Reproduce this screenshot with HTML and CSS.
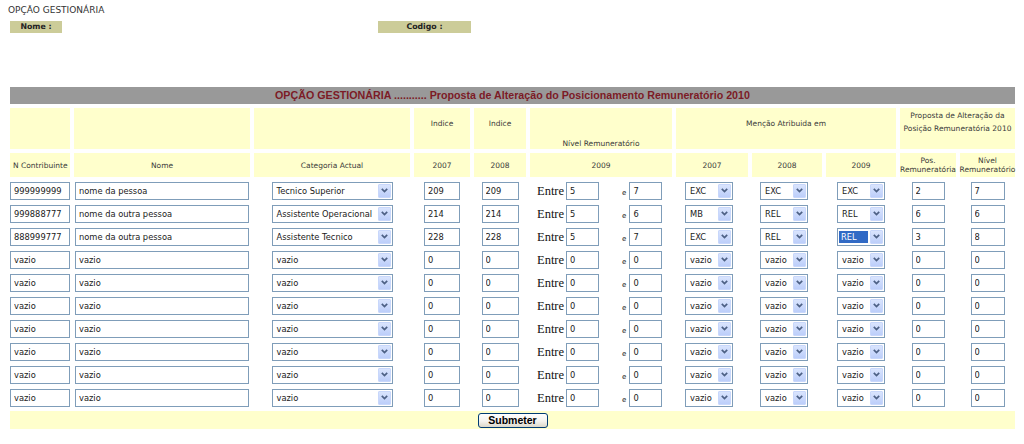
FILE: index.html
```html
<!DOCTYPE html>
<html lang="pt">
<head>
<meta charset="utf-8">
<title>Opção Gestionária</title>
<link rel="stylesheet" href="styles.css">
</head>
<body>
<div class="page">
  <div class="page-title">OPÇÃO GESTIONÁRIA</div>
  <div class="info">
    <span class="label label-nome">Nome :</span>
    <span class="label label-codigo">Codigo :</span>
  </div>

  <form class="form">
    <div class="grid">
      <div class="bar">OPÇÃO GESTIONÁRIA ........... Proposta de Alteração do Posicionamento Remuneratório 2010</div>

      <div class="hd"></div>
      <div class="hd"></div>
      <div class="hd"></div>
      <div class="hd hd-top">Indice</div>
      <div class="hd hd-top">Indice</div>
      <div class="hd hd-bottom">Nível Remuneratório</div>
      <div class="hd hd-top span3">Menção Atribuida em</div>
      <div class="hd hd-prop span2">Proposta de Alteração da<br>Posição Remuneratória 2010</div>

      <div class="hd hd2 hd-left">N Contribuinte</div>
      <div class="hd hd2">Nome</div>
      <div class="hd hd2">Categoria Actual</div>
      <div class="hd hd2">2007</div>
      <div class="hd hd2">2008</div>
      <div class="hd hd2">2009</div>
      <div class="hd hd2">2007</div>
      <div class="hd hd2">2008</div>
      <div class="hd hd2">2009</div>
      <div class="hd hd2">Pos.<br>Remuneratória</div>
      <div class="hd hd2">Nível<br>Remuneratório</div>

      <!-- row 1 -->
      <div class="cell"><input class="in w-nc" value="999999999"></div>
      <div class="cell"><input class="in w-nome" value="nome da pessoa"></div>
      <div class="cell"><div class="sel w-cat"><span class="sel-val">Tecnico Superior</span><span class="sel-btn"><svg viewBox="0 0 7 5"><path d="M0.8 0.8 3.5 3.6 6.2 0.8"/></svg></span></div></div>
      <div class="cell"><input class="in w-ind" value="209"></div>
      <div class="cell"><input class="in w-ind2" value="209"></div>
      <div class="cell cell-nivel"><span class="entre">Entre</span><input class="in w-niv" value="5"><span class="e">e</span><input class="in w-niv" value="7"></div>
      <div class="cell c-men"><div class="sel w-men"><span class="sel-val">EXC</span><span class="sel-btn"><svg viewBox="0 0 7 5"><path d="M0.8 0.8 3.5 3.6 6.2 0.8"/></svg></span></div></div>
      <div class="cell c-men"><div class="sel w-men"><span class="sel-val">EXC</span><span class="sel-btn"><svg viewBox="0 0 7 5"><path d="M0.8 0.8 3.5 3.6 6.2 0.8"/></svg></span></div></div>
      <div class="cell"><div class="sel w-men"><span class="sel-val">EXC</span><span class="sel-btn"><svg viewBox="0 0 7 5"><path d="M0.8 0.8 3.5 3.6 6.2 0.8"/></svg></span></div></div>
      <div class="cell"><input class="in w-pos" value="2"></div>
      <div class="cell"><input class="in w-pos2" value="7"></div>

      <!-- row 2 -->
      <div class="cell"><input class="in w-nc" value="999888777"></div>
      <div class="cell"><input class="in w-nome" value="nome da outra pessoa"></div>
      <div class="cell"><div class="sel w-cat"><span class="sel-val">Assistente Operacional</span><span class="sel-btn"><svg viewBox="0 0 7 5"><path d="M0.8 0.8 3.5 3.6 6.2 0.8"/></svg></span></div></div>
      <div class="cell"><input class="in w-ind" value="214"></div>
      <div class="cell"><input class="in w-ind2" value="214"></div>
      <div class="cell cell-nivel"><span class="entre">Entre</span><input class="in w-niv" value="5"><span class="e">e</span><input class="in w-niv" value="6"></div>
      <div class="cell c-men"><div class="sel w-men"><span class="sel-val">MB</span><span class="sel-btn"><svg viewBox="0 0 7 5"><path d="M0.8 0.8 3.5 3.6 6.2 0.8"/></svg></span></div></div>
      <div class="cell c-men"><div class="sel w-men"><span class="sel-val">REL</span><span class="sel-btn"><svg viewBox="0 0 7 5"><path d="M0.8 0.8 3.5 3.6 6.2 0.8"/></svg></span></div></div>
      <div class="cell"><div class="sel w-men"><span class="sel-val">REL</span><span class="sel-btn"><svg viewBox="0 0 7 5"><path d="M0.8 0.8 3.5 3.6 6.2 0.8"/></svg></span></div></div>
      <div class="cell"><input class="in w-pos" value="6"></div>
      <div class="cell"><input class="in w-pos2" value="6"></div>

      <!-- row 3 -->
      <div class="cell"><input class="in w-nc" value="888999777"></div>
      <div class="cell"><input class="in w-nome" value="nome da outra pessoa"></div>
      <div class="cell"><div class="sel w-cat"><span class="sel-val">Assistente Tecnico</span><span class="sel-btn"><svg viewBox="0 0 7 5"><path d="M0.8 0.8 3.5 3.6 6.2 0.8"/></svg></span></div></div>
      <div class="cell"><input class="in w-ind" value="228"></div>
      <div class="cell"><input class="in w-ind2" value="228"></div>
      <div class="cell cell-nivel"><span class="entre">Entre</span><input class="in w-niv" value="5"><span class="e">e</span><input class="in w-niv" value="7"></div>
      <div class="cell c-men"><div class="sel w-men"><span class="sel-val">EXC</span><span class="sel-btn"><svg viewBox="0 0 7 5"><path d="M0.8 0.8 3.5 3.6 6.2 0.8"/></svg></span></div></div>
      <div class="cell c-men"><div class="sel w-men"><span class="sel-val">REL</span><span class="sel-btn"><svg viewBox="0 0 7 5"><path d="M0.8 0.8 3.5 3.6 6.2 0.8"/></svg></span></div></div>
      <div class="cell"><div class="sel w-men"><span class="sel-val hl">REL</span><span class="sel-btn"><svg viewBox="0 0 7 5"><path d="M0.8 0.8 3.5 3.6 6.2 0.8"/></svg></span></div></div>
      <div class="cell"><input class="in w-pos" value="3"></div>
      <div class="cell"><input class="in w-pos2" value="8"></div>

      <!-- row 4 -->
      <div class="cell"><input class="in w-nc" value="vazio"></div>
      <div class="cell"><input class="in w-nome" value="vazio"></div>
      <div class="cell"><div class="sel w-cat"><span class="sel-val">vazio</span><span class="sel-btn"><svg viewBox="0 0 7 5"><path d="M0.8 0.8 3.5 3.6 6.2 0.8"/></svg></span></div></div>
      <div class="cell"><input class="in w-ind" value="0"></div>
      <div class="cell"><input class="in w-ind2" value="0"></div>
      <div class="cell cell-nivel"><span class="entre">Entre</span><input class="in w-niv" value="0"><span class="e">e</span><input class="in w-niv" value="0"></div>
      <div class="cell c-men"><div class="sel w-men"><span class="sel-val">vazio</span><span class="sel-btn"><svg viewBox="0 0 7 5"><path d="M0.8 0.8 3.5 3.6 6.2 0.8"/></svg></span></div></div>
      <div class="cell c-men"><div class="sel w-men"><span class="sel-val">vazio</span><span class="sel-btn"><svg viewBox="0 0 7 5"><path d="M0.8 0.8 3.5 3.6 6.2 0.8"/></svg></span></div></div>
      <div class="cell"><div class="sel w-men"><span class="sel-val">vazio</span><span class="sel-btn"><svg viewBox="0 0 7 5"><path d="M0.8 0.8 3.5 3.6 6.2 0.8"/></svg></span></div></div>
      <div class="cell"><input class="in w-pos" value="0"></div>
      <div class="cell"><input class="in w-pos2" value="0"></div>

      <!-- row 5 -->
      <div class="cell"><input class="in w-nc" value="vazio"></div>
      <div class="cell"><input class="in w-nome" value="vazio"></div>
      <div class="cell"><div class="sel w-cat"><span class="sel-val">vazio</span><span class="sel-btn"><svg viewBox="0 0 7 5"><path d="M0.8 0.8 3.5 3.6 6.2 0.8"/></svg></span></div></div>
      <div class="cell"><input class="in w-ind" value="0"></div>
      <div class="cell"><input class="in w-ind2" value="0"></div>
      <div class="cell cell-nivel"><span class="entre">Entre</span><input class="in w-niv" value="0"><span class="e">e</span><input class="in w-niv" value="0"></div>
      <div class="cell c-men"><div class="sel w-men"><span class="sel-val">vazio</span><span class="sel-btn"><svg viewBox="0 0 7 5"><path d="M0.8 0.8 3.5 3.6 6.2 0.8"/></svg></span></div></div>
      <div class="cell c-men"><div class="sel w-men"><span class="sel-val">vazio</span><span class="sel-btn"><svg viewBox="0 0 7 5"><path d="M0.8 0.8 3.5 3.6 6.2 0.8"/></svg></span></div></div>
      <div class="cell"><div class="sel w-men"><span class="sel-val">vazio</span><span class="sel-btn"><svg viewBox="0 0 7 5"><path d="M0.8 0.8 3.5 3.6 6.2 0.8"/></svg></span></div></div>
      <div class="cell"><input class="in w-pos" value="0"></div>
      <div class="cell"><input class="in w-pos2" value="0"></div>

      <!-- row 6 -->
      <div class="cell"><input class="in w-nc" value="vazio"></div>
      <div class="cell"><input class="in w-nome" value="vazio"></div>
      <div class="cell"><div class="sel w-cat"><span class="sel-val">vazio</span><span class="sel-btn"><svg viewBox="0 0 7 5"><path d="M0.8 0.8 3.5 3.6 6.2 0.8"/></svg></span></div></div>
      <div class="cell"><input class="in w-ind" value="0"></div>
      <div class="cell"><input class="in w-ind2" value="0"></div>
      <div class="cell cell-nivel"><span class="entre">Entre</span><input class="in w-niv" value="0"><span class="e">e</span><input class="in w-niv" value="0"></div>
      <div class="cell c-men"><div class="sel w-men"><span class="sel-val">vazio</span><span class="sel-btn"><svg viewBox="0 0 7 5"><path d="M0.8 0.8 3.5 3.6 6.2 0.8"/></svg></span></div></div>
      <div class="cell c-men"><div class="sel w-men"><span class="sel-val">vazio</span><span class="sel-btn"><svg viewBox="0 0 7 5"><path d="M0.8 0.8 3.5 3.6 6.2 0.8"/></svg></span></div></div>
      <div class="cell"><div class="sel w-men"><span class="sel-val">vazio</span><span class="sel-btn"><svg viewBox="0 0 7 5"><path d="M0.8 0.8 3.5 3.6 6.2 0.8"/></svg></span></div></div>
      <div class="cell"><input class="in w-pos" value="0"></div>
      <div class="cell"><input class="in w-pos2" value="0"></div>

      <!-- row 7 -->
      <div class="cell"><input class="in w-nc" value="vazio"></div>
      <div class="cell"><input class="in w-nome" value="vazio"></div>
      <div class="cell"><div class="sel w-cat"><span class="sel-val">vazio</span><span class="sel-btn"><svg viewBox="0 0 7 5"><path d="M0.8 0.8 3.5 3.6 6.2 0.8"/></svg></span></div></div>
      <div class="cell"><input class="in w-ind" value="0"></div>
      <div class="cell"><input class="in w-ind2" value="0"></div>
      <div class="cell cell-nivel"><span class="entre">Entre</span><input class="in w-niv" value="0"><span class="e">e</span><input class="in w-niv" value="0"></div>
      <div class="cell c-men"><div class="sel w-men"><span class="sel-val">vazio</span><span class="sel-btn"><svg viewBox="0 0 7 5"><path d="M0.8 0.8 3.5 3.6 6.2 0.8"/></svg></span></div></div>
      <div class="cell c-men"><div class="sel w-men"><span class="sel-val">vazio</span><span class="sel-btn"><svg viewBox="0 0 7 5"><path d="M0.8 0.8 3.5 3.6 6.2 0.8"/></svg></span></div></div>
      <div class="cell"><div class="sel w-men"><span class="sel-val">vazio</span><span class="sel-btn"><svg viewBox="0 0 7 5"><path d="M0.8 0.8 3.5 3.6 6.2 0.8"/></svg></span></div></div>
      <div class="cell"><input class="in w-pos" value="0"></div>
      <div class="cell"><input class="in w-pos2" value="0"></div>

      <!-- row 8 -->
      <div class="cell"><input class="in w-nc" value="vazio"></div>
      <div class="cell"><input class="in w-nome" value="vazio"></div>
      <div class="cell"><div class="sel w-cat"><span class="sel-val">vazio</span><span class="sel-btn"><svg viewBox="0 0 7 5"><path d="M0.8 0.8 3.5 3.6 6.2 0.8"/></svg></span></div></div>
      <div class="cell"><input class="in w-ind" value="0"></div>
      <div class="cell"><input class="in w-ind2" value="0"></div>
      <div class="cell cell-nivel"><span class="entre">Entre</span><input class="in w-niv" value="0"><span class="e">e</span><input class="in w-niv" value="0"></div>
      <div class="cell c-men"><div class="sel w-men"><span class="sel-val">vazio</span><span class="sel-btn"><svg viewBox="0 0 7 5"><path d="M0.8 0.8 3.5 3.6 6.2 0.8"/></svg></span></div></div>
      <div class="cell c-men"><div class="sel w-men"><span class="sel-val">vazio</span><span class="sel-btn"><svg viewBox="0 0 7 5"><path d="M0.8 0.8 3.5 3.6 6.2 0.8"/></svg></span></div></div>
      <div class="cell"><div class="sel w-men"><span class="sel-val">vazio</span><span class="sel-btn"><svg viewBox="0 0 7 5"><path d="M0.8 0.8 3.5 3.6 6.2 0.8"/></svg></span></div></div>
      <div class="cell"><input class="in w-pos" value="0"></div>
      <div class="cell"><input class="in w-pos2" value="0"></div>

      <!-- row 9 -->
      <div class="cell"><input class="in w-nc" value="vazio"></div>
      <div class="cell"><input class="in w-nome" value="vazio"></div>
      <div class="cell"><div class="sel w-cat"><span class="sel-val">vazio</span><span class="sel-btn"><svg viewBox="0 0 7 5"><path d="M0.8 0.8 3.5 3.6 6.2 0.8"/></svg></span></div></div>
      <div class="cell"><input class="in w-ind" value="0"></div>
      <div class="cell"><input class="in w-ind2" value="0"></div>
      <div class="cell cell-nivel"><span class="entre">Entre</span><input class="in w-niv" value="0"><span class="e">e</span><input class="in w-niv" value="0"></div>
      <div class="cell c-men"><div class="sel w-men"><span class="sel-val">vazio</span><span class="sel-btn"><svg viewBox="0 0 7 5"><path d="M0.8 0.8 3.5 3.6 6.2 0.8"/></svg></span></div></div>
      <div class="cell c-men"><div class="sel w-men"><span class="sel-val">vazio</span><span class="sel-btn"><svg viewBox="0 0 7 5"><path d="M0.8 0.8 3.5 3.6 6.2 0.8"/></svg></span></div></div>
      <div class="cell"><div class="sel w-men"><span class="sel-val">vazio</span><span class="sel-btn"><svg viewBox="0 0 7 5"><path d="M0.8 0.8 3.5 3.6 6.2 0.8"/></svg></span></div></div>
      <div class="cell"><input class="in w-pos" value="0"></div>
      <div class="cell"><input class="in w-pos2" value="0"></div>

      <!-- row 10 -->
      <div class="cell"><input class="in w-nc" value="vazio"></div>
      <div class="cell"><input class="in w-nome" value="vazio"></div>
      <div class="cell"><div class="sel w-cat"><span class="sel-val">vazio</span><span class="sel-btn"><svg viewBox="0 0 7 5"><path d="M0.8 0.8 3.5 3.6 6.2 0.8"/></svg></span></div></div>
      <div class="cell"><input class="in w-ind" value="0"></div>
      <div class="cell"><input class="in w-ind2" value="0"></div>
      <div class="cell cell-nivel"><span class="entre">Entre</span><input class="in w-niv" value="0"><span class="e">e</span><input class="in w-niv" value="0"></div>
      <div class="cell c-men"><div class="sel w-men"><span class="sel-val">vazio</span><span class="sel-btn"><svg viewBox="0 0 7 5"><path d="M0.8 0.8 3.5 3.6 6.2 0.8"/></svg></span></div></div>
      <div class="cell c-men"><div class="sel w-men"><span class="sel-val">vazio</span><span class="sel-btn"><svg viewBox="0 0 7 5"><path d="M0.8 0.8 3.5 3.6 6.2 0.8"/></svg></span></div></div>
      <div class="cell"><div class="sel w-men"><span class="sel-val">vazio</span><span class="sel-btn"><svg viewBox="0 0 7 5"><path d="M0.8 0.8 3.5 3.6 6.2 0.8"/></svg></span></div></div>
      <div class="cell"><input class="in w-pos" value="0"></div>
      <div class="cell"><input class="in w-pos2" value="0"></div>

      <div class="foot"><button type="button" class="submit">Submeter</button></div>
    </div>
  </form>
</div>
</body>
</html>
```

FILE: styles.css
```css
* {
  box-sizing: border-box;
}

body {
  margin: 0;
  background: #ffffff;
  font-family: "DejaVu Sans", Verdana, sans-serif;
  color: #222222;
}

.page {
  padding: 5px 0 0 8px;
}

.page-title {
  font-size: 9px;
  line-height: 11px;
  color: #333333;
}

.info {
  display: flex;
  margin: 5px 0 0 2px;
}

.label {
  height: 12px;
  line-height: 12px;
  background: #cccc99;
  font-weight: bold;
  font-size: 7.8px;
  text-align: center;
  color: #222222;
}

.label-nome {
  width: 52px;
}

.label-codigo {
  width: 93px;
  margin-left: 316px;
}

.form {
  margin: 0;
}

.grid {
  display: grid;
  width: 1005px;
  margin: 54px 0 0 2px;
  grid-template-columns: 60px 176px 156px 56px 52px 142px 72px 70px 70px 56px 55px;
  grid-template-rows: 17px 41px 24px repeat(10, 19px) 18px;
  gap: 4px;
}

.bar {
  grid-column: 1 / -1;
  background: #999999;
  color: #7c1b26;
  font-family: "Liberation Sans", Arial, sans-serif;
  font-weight: bold;
  font-size: 10.7px;
  line-height: 17px;
  text-align: center;
  white-space: nowrap;
}

.hd {
  background: #ffffcc;
  font-size: 7.5px;
  line-height: 13px;
  color: #3a3a3a;
  display: flex;
  flex-direction: column;
  justify-content: center;
  align-items: center;
  text-align: center;
  white-space: nowrap;
}

.hd-top {
  padding-bottom: 11px;
}

.hd-bottom {
  padding-top: 29px;
}

.hd-prop {
  padding-bottom: 14px;
}

.span3 {
  grid-column: span 3;
}

.span2 {
  grid-column: span 2;
}

.hd2 {
  line-height: 9px;
}

.hd-left {
  align-items: flex-start;
  padding-left: 3px;
}

.cell {
  display: flex;
  align-items: center;
  justify-content: center;
}

.c-men {
  padding-right: 6px;
}

.in {
  height: 18px;
  border: 1px solid #7f9db9;
  background: #ffffff;
  padding: 0 3px;
  margin: 0;
  font-family: "DejaVu Sans", Verdana, sans-serif;
  font-size: 8.3px;
  color: #1a1a1a;
  outline: none;
}

.w-nc { width: 60px; }
.w-nome { width: 174px; }
.w-ind { width: 36px; }
.w-ind2 { width: 37px; }
.w-niv { width: 33px; }
.w-pos { width: 33px; }
.w-pos2 { width: 34px; }

.cell-nivel {
  justify-content: flex-start;
  align-items: flex-end;
  padding-left: 7px;
}

.entre {
  font-family: "Liberation Serif", "Times New Roman", serif;
  font-size: 12.5px;
  line-height: 12.5px;
  color: #111111;
  margin: 0 2px 3px 0;
}

.e {
  font-size: 7px;
  line-height: 7px;
  margin: 0 3px 3px 23px;
  color: #222222;
}

.sel {
  display: flex;
  height: 18px;
  border: 1px solid #7f9db9;
  background: #ffffff;
  padding: 1px;
  font-size: 8.3px;
  color: #1a1a1a;
}

.w-cat { width: 121px; }
.w-men { width: 48px; }

.sel-val {
  flex: 1;
  display: flex;
  align-items: center;
  padding-left: 3px;
  white-space: nowrap;
  overflow: hidden;
}

.sel-val.hl {
  background: #316ac5;
  color: #ffffff;
  margin: 1px 2px 1px 0;
  padding-left: 2px;
}

.sel-btn {
  width: 13px;
  display: flex;
  align-items: center;
  justify-content: center;
  background: linear-gradient(#d9e4fd, #bccefa);
  border: 1px solid #c8d7fb;
  border-radius: 1px;
}

.sel-btn svg {
  width: 7px;
  height: 5px;
  fill: none;
  stroke: #4d6185;
  stroke-width: 1.7;
}

.foot {
  grid-column: 1 / -1;
  background: #ffffcc;
  display: flex;
  align-items: center;
  justify-content: center;
}

.submit {
  width: 70px;
  height: 15px;
  padding: 0;
  border: 1px solid #003c74;
  border-radius: 3px;
  background: linear-gradient(#ffffff, #f4f3ee 55%, #dcd8c8);
  font-family: "Liberation Sans", Arial, sans-serif;
  font-weight: bold;
  font-size: 10.5px;
  line-height: 13px;
  color: #000000;
}
```
